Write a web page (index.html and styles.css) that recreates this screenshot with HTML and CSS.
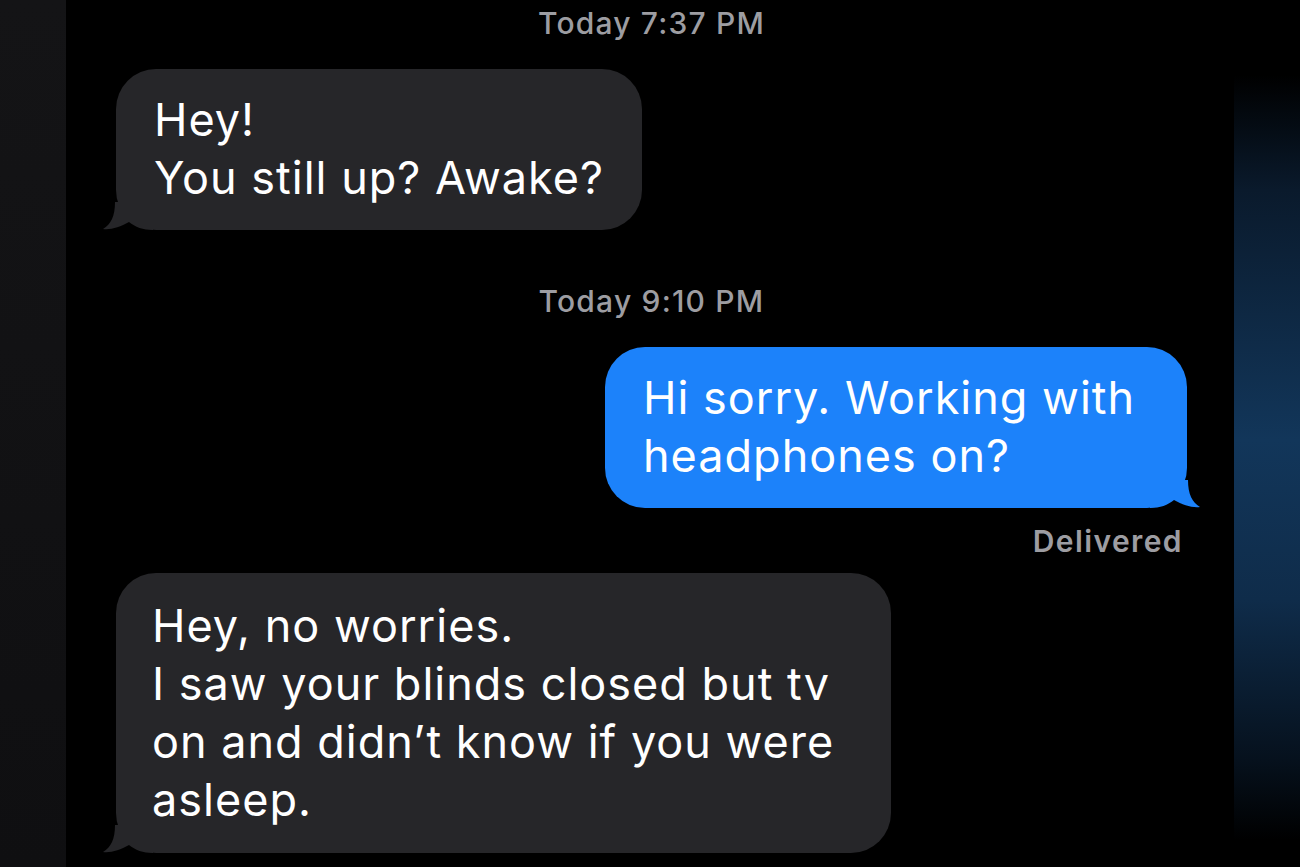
FILE: index.html
```html
<!DOCTYPE html>
<html lang="en">
<head>
    <meta charset="UTF-8">
    <meta name="viewport" content="width=device-width, initial-scale=1.0">
    <title>Messages</title>
    <link rel="stylesheet" href="styles.css">
</head>
<body>

    <div class="stage">
        <div class="side side-left"></div>

        <!-- Conversation -->
        <div class="chat">
            <div class="stamp stamp-first">Today 7:37 PM</div>

            <div class="bubble in bubble-one">
                Hey!<br>You still up? Awake?
                <svg class="tail" width="50" height="28" viewBox="0 0 50 28">
                    <path d="M12,0 C12,14 8,22 0,27 C8,28 17,25 26,20 C32,25 40,28 50,28 L50,0 Z"/>
                </svg>
            </div>

            <div class="stamp stamp-second">Today 9:10 PM</div>

            <div class="bubble out bubble-two">
                Hi sorry. Working with<br>headphones on?
                <svg class="tail" width="50" height="28" viewBox="0 0 50 28">
                    <path d="M38,0 C38,14 42,22 50,27 C42,28 33,25 24,20 C18,25 10,28 0,28 L0,0 Z"/>
                </svg>
            </div>
            <div class="status">Delivered</div>

            <div class="bubble in bubble-three">
                Hey, no worries.<br>I saw your blinds closed but tv<br>on and didn’t know if you were<br>asleep.
                <svg class="tail" width="50" height="28" viewBox="0 0 50 28">
                    <path d="M12,0 C12,14 8,22 0,27 C8,28 17,25 26,20 C32,25 40,28 50,28 L50,0 Z"/>
                </svg>
            </div>
        </div>

        <div class="side side-right"></div>
    </div>

</body>
</html>
```

FILE: styles.css
```css
body {
    margin: 0;
    background: #000;
    font-family: Inter, "Liberation Sans", Arial, sans-serif;
    color: #fff;
    overflow: hidden;
}
.stage {
    display: flex;
    height: 867px;
}
.side {
    width: 66px;
    flex-shrink: 0;
}
.side-left {
    background: linear-gradient(to bottom, #141416, #111113 60%, #0f0f11);
}
.side-right {
    background: linear-gradient(to bottom, #000 0, #000 75px, #0a1a2c 190px, #12365a 440px, #0f2c4a 600px, #06111d 760px, #000 840px);
}
.chat {
    flex: 1;
    display: flex;
    flex-direction: column;
    padding: 0 47px 0 50px;
}
.stamp {
    align-self: center;
    font-size: 30px;
    line-height: 36px;
    font-weight: 500;
    color: #9d9da2;
    letter-spacing: 1.2px;
}
.stamp-first {
    margin-top: 5px;
}
.stamp-second {
    margin-top: 53px;
}
.bubble {
    position: relative;
    font-size: 45px;
    line-height: 58px;
    letter-spacing: 1px;
    white-space: nowrap;
    border-radius: 40px;
    padding: 22px 40px 23px 38px;
    box-sizing: border-box;
}
.bubble .tail {
    position: absolute;
    bottom: 0;
}
.in {
    align-self: flex-start;
    background: #262629;
}
.in .tail {
    left: -13px;
    fill: #262629;
}
.out {
    align-self: flex-end;
    background: #1c82fa;
}
.out .tail {
    right: -13px;
    fill: #1c82fa;
}
.bubble-one {
    margin-top: 28px;
    width: 526px;
}
.bubble-two {
    margin-top: 28px;
    width: 582px;
}
.bubble-three {
    margin-top: 15px;
    width: 775px;
    padding: 24px 40px 24px 36px;
}
.status {
    align-self: flex-end;
    margin-top: 16px;
    margin-right: 4px;
    font-size: 30px;
    line-height: 34px;
    font-weight: 600;
    letter-spacing: 1.4px;
    color: #9d9da2;
}
```
